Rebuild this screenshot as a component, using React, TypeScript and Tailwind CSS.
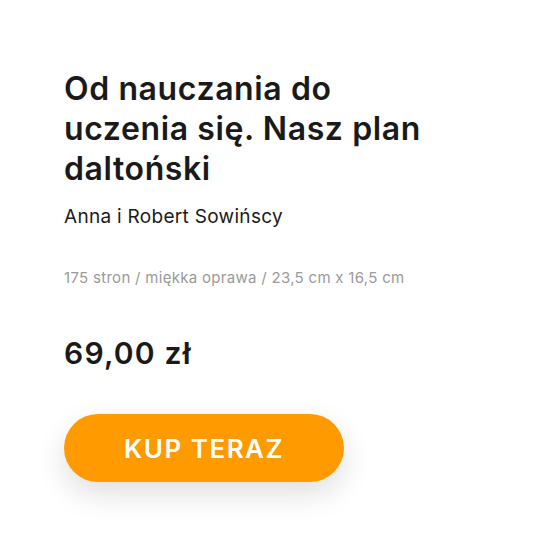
export default function App() {
  return (
    <div className="min-h-[553px] w-[540px] bg-white font-[family-name:Inter,sans-serif]">
      <div className="flex w-[440px] flex-col pl-16 pt-[69px]">
        <h1 className="text-[32px] leading-[40px] font-semibold tracking-[0.6px] text-[#1a1a1a]">
          Od nauczania do uczenia się. Nasz plan daltoński
        </h1>
        <p className="mt-[15px] text-[19px] leading-[26px] tracking-[0.3px] text-[#1a1a1a]">Anna i Robert Sowińscy</p>
        <p className="mt-[38px] text-[15px] leading-[20px] tracking-[0.3px] text-[#9a9a9a]">
          175 stron / miękka oprawa / 23,5 cm x 16,5 cm
        </p>
        <p className="mt-[47px] text-[30px] leading-[36px] font-semibold tracking-[1.2px] text-[#1a1a1a]">69,00 zł</p>
        <button className="mt-[43px] flex h-[68px] w-[280px] items-center justify-center rounded-full bg-[#ff9a00] text-[26px] font-semibold tracking-[1.5px] text-white shadow-[0_12px_30px_rgba(0,0,0,0.13)]">
          KUP TERAZ
        </button>
      </div>
    </div>
  );
}
